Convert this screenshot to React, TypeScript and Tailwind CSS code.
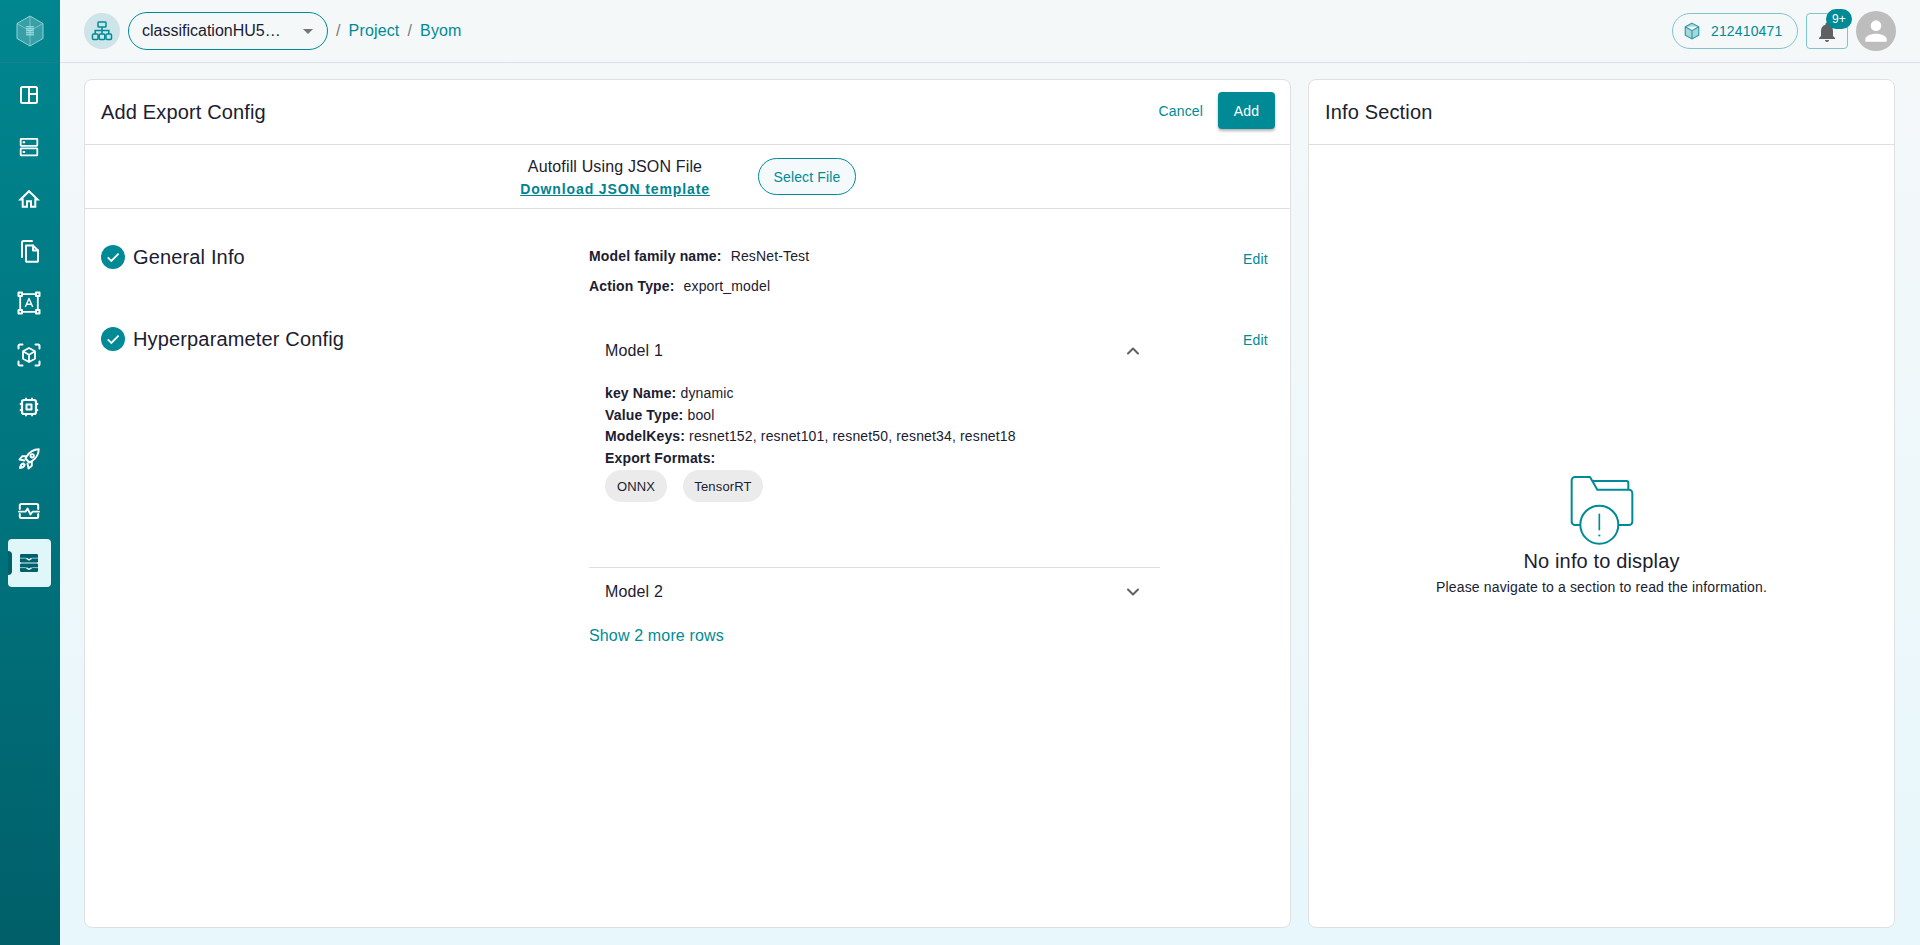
import { ChevronUp, ChevronDown } from "lucide-react";

const NavIcon = ({ d }: { d: React.ReactNode }) => (
  <svg viewBox="0 0 24 24" fill="none" stroke="currentColor" strokeWidth="2" strokeLinecap="round" strokeLinejoin="round" className="h-6 w-6">
    {d}
  </svg>
);

const navItems: React.ReactNode[] = [
  <NavIcon key="layout" d={<><rect x="4" y="4" width="16" height="16" rx="1.5" /><path d="M12 4v16M12 11h8" /></>} />,
  <NavIcon key="server" d={<><rect x="3.700" y="3.800" width="16.600" height="7" rx="0.500" strokeWidth="1.800" /><rect x="3.700" y="13.400" width="16.600" height="7" rx="0.500" strokeWidth="1.800" /><path d="M6.500 7.300h.8M6.500 16.900h.8" /></>} />,
  <NavIcon key="home" d={<path d="M3.500 12.500 12 4.200l8.500 8.300h-2.200v7.300h-4.300v-5.600h-4v5.600H5.700v-7.300z" strokeWidth="2" strokeLinejoin="miter" strokeLinecap="butt" />} />,
  <NavIcon key="files" d={<><path d="M9 6.500h7l5 5v10.500a.8.8 0 0 1-.8.800H9.800a.8.8 0 0 1-.8-.800z" /><path d="M16 6.500v5h5" /><path d="M5 18V3.500A1.500 1.500 0 0 1 6.500 2H15" /></>} />,
  <NavIcon key="text" d={<g strokeLinecap="butt"><rect x="1.500" y="1.500" width="3.500" height="3.500" strokeWidth="2" /><rect x="19" y="1.500" width="3.500" height="3.500" strokeWidth="2" /><rect x="1.500" y="19" width="3.500" height="3.500" strokeWidth="2" /><rect x="19" y="19" width="3.500" height="3.500" strokeWidth="2" /><path d="M5 3.200h14M5 20.800h14M3.200 5v14M20.800 5v14" strokeWidth="1.800" /><path d="m8.300 16 3.700-8.500 3.700 8.500M9.600 13.200h4.800" strokeWidth="1.400" /></g>} />,
  <NavIcon key="scan" d={<><path d="M1.500 5.500V3a1.500 1.500 0 0 1 1.500-1.500h2.500M18.500 1.500H21A1.500 1.500 0 0 1 22.500 3v2.500M1.500 18.500V21A1.500 1.500 0 0 0 3 22.500h2.500M18.500 22.500H21a1.500 1.500 0 0 0 1.500-1.500v-2.500" /><path d="m12 5 6 3.300v7.400L12 19l-6-3.300V8.300zM6 8.300l6 3.400 6-3.400M12 11.700V19" strokeWidth="1.800" /></>} />,
  <NavIcon key="chip" d={<><rect x="5" y="5" width="14" height="14" rx="2" strokeWidth="2.200" /><rect x="9.500" y="9.500" width="5" height="5" strokeWidth="2" /><path d="M9 2.800V5M15 2.800V5M9 19v2.200M15 19v2.200M2.800 9H5M2.800 15H5M19 9h2.200M19 15h2.200" strokeLinecap="butt" strokeWidth="1.800" /></>} />,
  <NavIcon key="rocket" d={<g strokeWidth="1.900"><path d="M21.800 2.200c-5 .2-9 2.500-12 7l-1.300 2.300 4 4 2.300-1.300c4.500-3 6.800-7 7-12z" /><circle cx="15.200" cy="8.800" r="1.700" /><path d="M9.200 9.200H5.300l-2.800 3.300 5 1" /><path d="M14.800 14.800v3.900l-3.300 2.800-1-5" /><path d="M6.300 16.300c-1.800.5-3 2.400-3.300 4.700 2.300-.3 4.200-1.500 4.700-3.300z" /></g>} />,
  <NavIcon key="pulse" d={<><path d="M2.800 10V6.500A1.500 1.500 0 0 1 4.300 5h15.400a1.500 1.500 0 0 1 1.500 1.500V10M2.800 15v2.500A1.500 1.500 0 0 0 4.300 19h15.400a1.500 1.500 0 0 0 1.500-1.500V15" /><path d="M2 12.700h6.500l2-3.200 3 6 2-2.800H22" strokeWidth="1.800" /></>} />,
];

const ActiveNavIcon = () => (
  <svg viewBox="0 0 18 18" className="h-[18px] w-[18px]">
    <rect x="0" y="0" width="18" height="8.400" rx="1.200" fill="#00606b" />
    <rect x="0" y="9.400" width="18" height="8.600" rx="1.200" fill="#00606b" />
    <path d="M0 4.200h5.500L9 6.300l3.500-2.100H18M0 13.600h5.500L9 15.700l3.500-2.100H18" fill="none" stroke="#8cc9cf" strokeWidth="1" />
    <path d="M6.500 4.300 9 5.800l2.500-1.500M6.500 13.700 9 15.200l2.500-1.500" fill="none" stroke="#e0f7fa" strokeWidth="1.300" />
  </svg>
);

const CheckBadge = () => (
  <span className="flex h-6 w-6 shrink-0 items-center justify-center rounded-full bg-[#008a96]">
    <svg viewBox="0 0 24 24" className="h-[18px] w-[18px]" fill="none" stroke="white" strokeWidth="2.400">
      <path d="m5 12.500 4.800 4.700L19.500 7.500" />
    </svg>
  </span>
);

const App = () => {
  return (
    <div className="flex h-[945px] w-[1920px] overflow-hidden bg-gradient-to-b from-[#f5f8f9] to-[#e7f7fb] font-['Liberation_Sans',Arial,sans-serif] tracking-[0.15px] text-[#1b2030]">
      {/* sidebar */}
      <aside className="flex w-[60px] shrink-0 flex-col bg-gradient-to-b from-[#00868f] via-[#00757f] to-[#005f69] text-white">
        <div className="flex h-[63px] items-center justify-center border-b border-[#1a7f88]">
          <svg viewBox="0 0 28 32" className="h-8 w-7" fill="none">
            <path d="M14 1 27 8.500v15L14 31 1 23.500v-15z" fill="#ffffff" fillOpacity="0.22" stroke="#8fd2d8" strokeWidth="1" />
            <path d="M14 16 1 8.500M14 16l13-7.500M14 16v15M14 1v15" stroke="#8fd2d8" strokeWidth="0.700" />
            <rect x="10" y="11" width="8" height="10" fill="#8fe0e8" fillOpacity="0.4" />
            <path d="M11 11v10M13 11v10M15 11v10M17 11v10" stroke="#e0fbff" strokeWidth="0.800" strokeDasharray="1 1" />
          </svg>
        </div>
        <nav className="flex flex-col gap-1 pt-2">
          {navItems.map((icon, i) => (
            <div key={i} className="flex h-12 w-[58px] items-center justify-center">
              {icon}
            </div>
          ))}
          <div className="relative mx-2 flex h-12 w-[43px] items-center justify-center rounded-[4px] bg-[#e0f7fa]">
            <span className="absolute left-0 top-3 h-6 w-1 rounded-r-sm bg-[#00606b]" />
            <span className="-ml-[1px] flex"><ActiveNavIcon /></span>
          </div>
        </nav>
      </aside>

      <main className="flex min-w-0 flex-1 flex-col">
        {/* top bar */}
        <header className="flex h-[63px] shrink-0 items-center justify-between border-b border-[#dde3e5] pl-6 pr-6">
          <div className="flex items-center">
            <span className="flex h-9 w-9 items-center justify-center rounded-full bg-[#cde4e8] text-[#008a96]">
              <svg viewBox="0 0 24 24" className="h-6 w-6" fill="none" stroke="currentColor" strokeWidth="1.500">
                <rect x="8" y="3" width="8" height="5" rx="0.800" />
                <rect x="2.500" y="15" width="5.500" height="5.500" rx="1" />
                <rect x="9.250" y="15" width="5.500" height="5.500" rx="1" />
                <rect x="16" y="15" width="5.500" height="5.500" rx="1" />
                <path d="M12 8v7M5.200 15v-3.500h13.600V15" />
              </svg>
            </span>
            <div className="ml-2 flex h-[38px] w-[200px] items-center rounded-full border border-[#008a96] pl-[13px] text-base tracking-normal">
              <span className="w-[140px] whitespace-nowrap">classificationHU5…</span>
              <span className="ml-[21px] h-0 w-0 border-x-[5px] border-t-[5px] border-x-transparent border-t-[#757575]" />
            </div>
            <div className="ml-2 flex items-center gap-2 text-base text-[#008a96]">
              <span className="text-[#7a7a7a]">/</span>
              <span>Project</span>
              <span className="text-[#7a7a7a]">/</span>
              <span>Byom</span>
            </div>
          </div>
          <div className="flex items-center">
            <div className="flex h-9 w-[126px] items-center gap-[10px] rounded-full border border-[#80c4cb] pl-[10px] text-sm text-[#008a96]">
              <svg viewBox="0 0 16 16" className="h-[18px] w-[18px]" fill="#a5d8dd" stroke="#2b97a2" strokeWidth="1">
                <path d="m8 1 6 3.300v7.400L8 15l-6-3.300V4.300zM2 4.300l6 3.400 6-3.400M8 7.700V15" />
              </svg>
              <span>212410471</span>
            </div>
            <div className="relative ml-2 flex h-9 w-[42px] items-center justify-center rounded-[4px] border border-[#80c4cb]">
              <svg viewBox="0 0 24 24" className="h-6 w-6 translate-y-[1px] text-[#616161]" fill="currentColor">
                <path d="M12 22a2 2 0 0 0 2-2h-4a2 2 0 0 0 2 2zm6-6v-5c0-3.100-1.600-5.600-4.500-6.300V4a1.500 1.500 0 0 0-3 0v.700C7.600 5.400 6 7.900 6 11v5l-2 2v1h16v-1z" />
              </svg>
              <span className="absolute -right-[5px] -top-[5px] flex h-5 w-[26px] items-center justify-center rounded-full bg-[#008a96] text-xs text-white">9+</span>
            </div>
            <span className="ml-2 flex h-10 w-10 items-center justify-center rounded-full bg-[#bdbdbd]">
              <svg viewBox="0 0 24 24" className="h-8 w-8" fill="white">
                <path d="M12 12a4 4 0 1 0 0-8 4 4 0 0 0 0 8zm0 2c-2.700 0-8 1.300-8 4v2h16v-2c0-2.700-5.300-4-8-4z" />
              </svg>
            </span>
          </div>
        </header>

        {/* panels */}
        <div className="flex min-h-0 flex-1 gap-[17px] pb-[17px] pl-6 pr-[25px] pt-4">
          <section className="flex w-[1207px] flex-col rounded-lg border border-[#e0e0e0] bg-white">
            <div className="flex h-[65px] shrink-0 items-center justify-between border-b border-[#e0e0e0] pl-4 pr-[15px]">
              <h1 className="text-xl">Add Export Config</h1>
              <div className="mb-[3px] flex items-center gap-[15px]">
                <button className="text-sm text-[#008a96]">Cancel</button>
                <button className="h-[37px] w-[57px] rounded-[4px] bg-[#008a96] text-sm text-white shadow-[0_2px_3px_rgba(0,0,0,0.3)]">Add</button>
              </div>
            </div>

            <div className="flex h-[64px] shrink-0 items-center border-b border-[#e0e0e0] pl-[435px]">
              <div className="flex w-[190px] flex-col items-center">
                <span className="text-base leading-6">Autofill Using JSON File</span>
                <a className="whitespace-nowrap text-sm font-bold leading-5 tracking-[0.88px] text-[#00838f] underline">Download JSON template</a>
              </div>
              <button className="ml-12 h-[37px] w-[98px] rounded-full border border-[#008a96] bg-[#f4fafb] text-sm text-[#008a96]">Select File</button>
            </div>

            <div className="flex flex-col pl-4 pr-4 pt-[36px]">
              {/* general info */}
              <div className="flex h-[82px] items-start">
                <div className="-mt-[2px] flex w-[488px] shrink-0 items-center gap-2 text-xl">
                  <CheckBadge />
                  <span>General Info</span>
                </div>
                <div className="flex w-[654px] shrink-0 flex-col gap-[10px] pt-px text-sm leading-5">
                  <p><b>Model family name:</b><span className="ml-[9px]">ResNet-Test</span></p>
                  <p><b>Action Type:</b><span className="ml-[9px]">export_model</span></p>
                </div>
                <button className="mt-[4px] text-sm leading-5 text-[#008a96]">Edit</button>
              </div>

              {/* hyperparameter config */}
              <div className="flex items-start">
                <div className="-mt-[2px] flex w-[488px] shrink-0 items-center gap-2 text-xl">
                  <CheckBadge />
                  <span>Hyperparameter Config</span>
                </div>
                <div className="flex w-[654px] shrink-0 flex-col">
                  <div className="w-[571px]">
                    <div className="flex h-12 items-center justify-between pl-4 pr-4 text-base">
                      <span>Model 1</span>
                      <ChevronUp className="h-5 w-5 -translate-x-[1px] text-[#616161]" strokeWidth={2.4} />
                    </div>
                    <div className="h-[193px] border-b border-[#e0e0e0] pl-4 pt-2 text-sm leading-[21.600px]">
                      <p><b>key Name:</b> dynamic</p>
                      <p><b>Value Type:</b> bool</p>
                      <p><b>ModelKeys:</b> resnet152, resnet101, resnet50, resnet34, resnet18</p>
                      <p><b>Export Formats:</b></p>
                      <div className="mt-[1px] flex gap-4 text-[13px]">
                        <span className="flex h-8 w-[62px] items-center justify-center rounded-2xl bg-[#ebebeb]">ONNX</span>
                        <span className="flex h-8 w-[80px] items-center justify-center rounded-2xl bg-[#ebebeb]">TensorRT</span>
                      </div>
                    </div>
                    <div className="flex h-12 items-center justify-between pl-4 pr-4 text-base">
                      <span>Model 2</span>
                      <ChevronDown className="h-5 w-5 -translate-x-[1px] text-[#616161]" strokeWidth={2.4} />
                    </div>
                    <div className="mt-2 text-base leading-6 text-[#008a96]">Show 2 more rows</div>
                  </div>
                </div>
                <button className="mt-[3px] text-sm leading-5 text-[#008a96]">Edit</button>
              </div>
            </div>
          </section>

          <section className="flex min-w-0 flex-1 flex-col rounded-lg border border-[#e0e0e0] bg-white">
            <div className="flex h-[65px] shrink-0 items-center border-b border-[#e0e0e0] pl-4">
              <h2 className="text-xl">Info Section</h2>
            </div>
            <div className="flex flex-1 flex-col items-center justify-center">
              <svg viewBox="510 74 192 212" className="h-[70.670px] w-16" fill="none" stroke="#008a96" strokeWidth="6" strokeLinejoin="round">
                <path d="M543 224H525a10 10 0 0 1-10-10V90a10 10 0 0 1 10-10h45l22 38h95a10 10 0 0 1 10 10v86a10 10 0 0 1-10 10h-32" />
                <path d="M578 92h102a5 5 0 0 1 5 5v21" />
                <circle cx="598" cy="223" r="57" />
                <path d="M598 190v50" strokeWidth="5" />
                <path d="M598 253v5" strokeWidth="6" />
              </svg>
              <p className="mt-[2px] text-xl leading-7">No info to display</p>
              <p className="mt-[2px] text-sm leading-5">Please navigate to a section to read the information.</p>
            </div>
          </section>
        </div>
      </main>
    </div>
  );
};

export default App;
